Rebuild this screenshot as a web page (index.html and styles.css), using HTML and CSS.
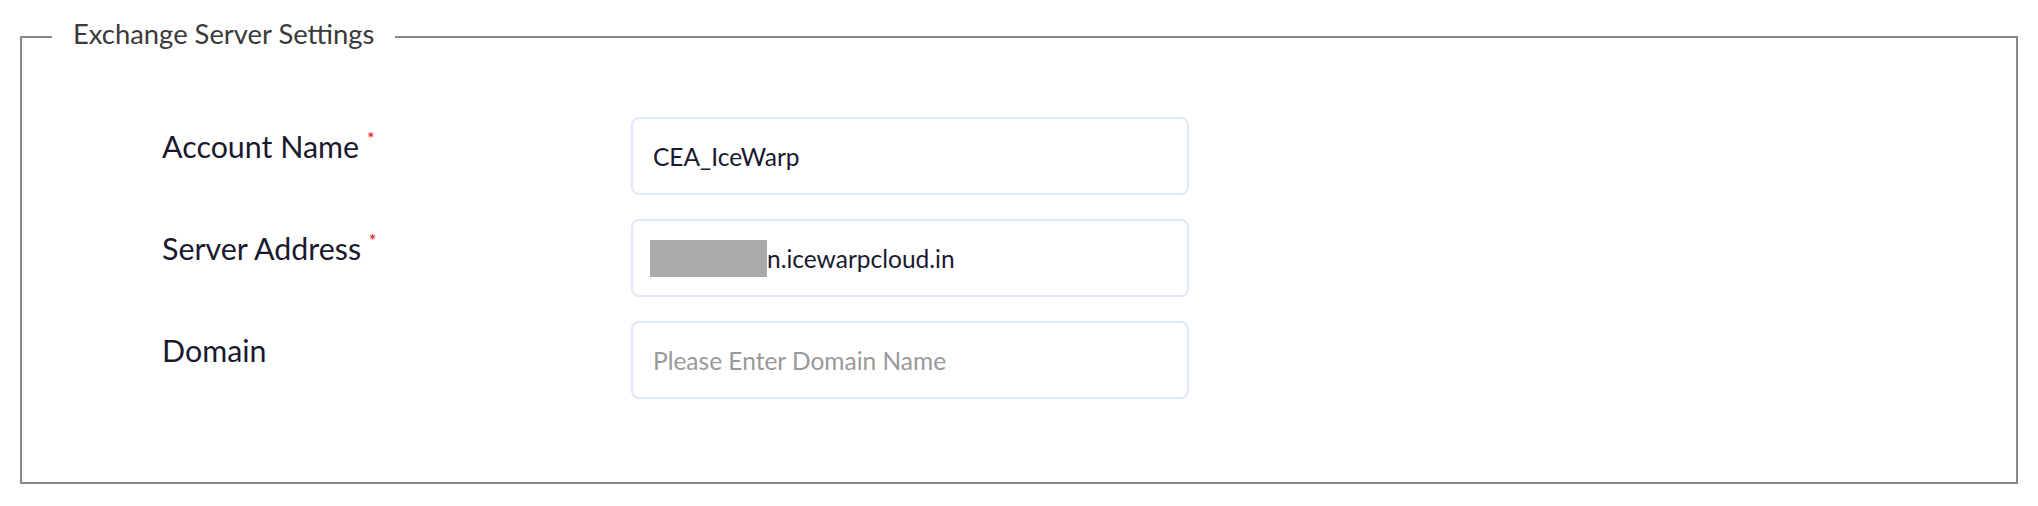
FILE: index.html
```html
<!DOCTYPE html>
<html lang="en">
<head>
<meta charset="utf-8">
<title>Exchange Server Settings</title>
<link rel="stylesheet" href="styles.css">
</head>
<body>
<div class="page">
  <fieldset class="settings">
    <legend class="settings-title">Exchange Server Settings</legend>
    <div class="form-grid">
      <label class="field-label">Account Name<span class="req">*</span></label>
      <div class="field-box"><span class="field-value">CEA_IceWarp</span></div>

      <label class="field-label">Server Address<span class="req">*</span></label>
      <div class="field-box"><span class="redact"></span><span class="field-value">n.icewarpcloud.in</span></div>

      <label class="field-label">Domain</label>
      <div class="field-box"><span class="field-placeholder">Please Enter Domain Name</span></div>
    </div>
  </fieldset>
</div>
</body>
</html>
```

FILE: styles.css
```css
* { box-sizing: border-box; }
html, body { margin: 0; padding: 0; background: #ffffff; }
body { font-family: "Lato", "Liberation Sans", sans-serif; }

.page {
  padding-top: 19px;
  width: 2038px;
  height: 506px;
}

.settings {
  margin: 0 20px;
  padding: 0;
  border: 2px solid #8a8a8a;
  min-width: 0;
}

.settings-title {
  margin-left: 30px;
  padding: 0 21px 6px;
  font-size: 27.4px;
  line-height: 30px;
  color: #3a3a3a;
}

.form-grid {
  display: grid;
  grid-template-columns: 469px 558px;
  grid-auto-rows: 78px;
  row-gap: 24px;
  padding: 62px 0 83px 140px;
}

.field-label {
  font-size: 30.4px;
  line-height: 36px;
  padding-top: 11px;
  color: #1a1930;
  white-space: nowrap;
}

.req {
  color: #e8322a;
  font-size: 17px;
  font-weight: 700;
  vertical-align: top;
  position: relative;
  top: -7px;
  margin-left: 8px;
}

.field-box {
  display: flex;
  align-items: center;
  border: 2px solid #dfe7fa;
  border-radius: 8px;
  padding: 0 20px;
  font-size: 24.5px;
  color: #1a1930;
}

.redact {
  display: inline-block;
  width: 117px;
  height: 37px;
  background: #aaaaaa;
  margin-left: -3px;
}

.field-placeholder { color: #999999; }
```
